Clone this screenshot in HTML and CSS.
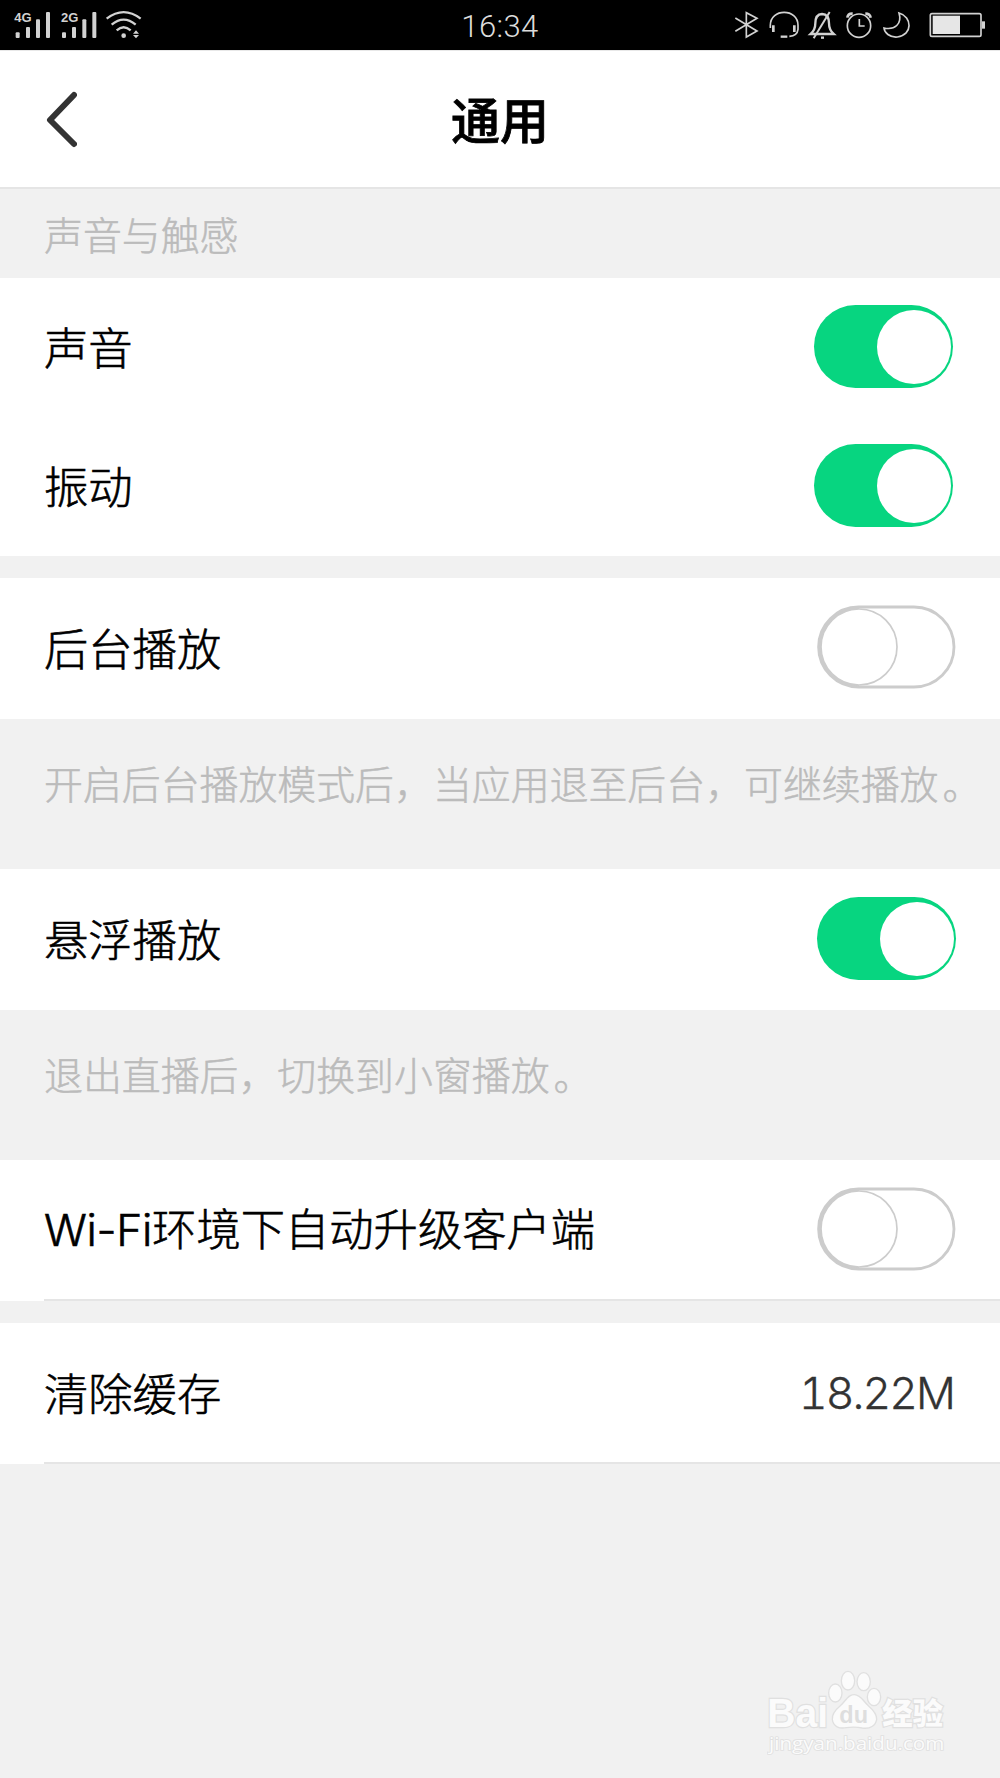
FILE: index.html
```html
<!DOCTYPE html>
<html lang="zh-CN">
<head>
<meta charset="utf-8">
<title>通用</title>
<link rel="stylesheet" href="styles.css">
</head>
<body>
<svg class="defs" width="0" height="0" aria-hidden="true">
  <symbol id="toggle-off" viewBox="0 0 139 84">
    <rect x="1.6" y="2" width="135.4" height="80" rx="40" fill="#fff" stroke="#ccc" stroke-width="2.8"/>
    <path d="M42 2a40 40 0 0 0 0 80z" fill="#ccc"/>
    <circle cx="42" cy="42" r="38" fill="#fff" stroke="#ccc" stroke-width="1.7"/>
  </symbol>
</svg>
<div class="screen">
  <div class="status">
    <svg class="status-left" viewBox="0 0 480 150">
      <g fill="#d2d2d2">
        <text x="43" y="66" class="net">4G</text>
        <text x="183" y="66" class="net">2G</text>
        <rect x="47" y="97" width="12" height="17" rx="3"/><rect x="78" y="81" width="12" height="33" rx="3"/><rect x="108" y="58" width="12" height="56" rx="3"/><rect x="138" y="36" width="12" height="78" rx="3"/>
        <rect x="186" y="97" width="12" height="17" rx="3"/><rect x="216" y="81" width="12" height="33" rx="3"/><rect x="247" y="58" width="12" height="56" rx="3"/><rect x="277" y="36" width="12" height="78" rx="3"/>
        <circle cx="371" cy="107" r="7"/>
        <path d="M399 101l9-10 9 10zM399 105h18l-9 10z"/>
      </g>
      <g fill="none" stroke="#d2d2d2" stroke-width="7">
        <path d="M320 56Q371 17 422 56M335 74Q371 44 407 74M350 91Q371 72 392 91"/>
      </g>
    </svg>
    <div class="clock">16:34</div>
    <svg class="status-right" viewBox="0 0 840 150">
      <g fill="none" stroke="#d2d2d2" stroke-width="5">
        <path d="M46 54l65 39-32 18V38l32 17-65 39"/>
        <path d="M151 84V76C151 24 234 24 234 76V88Q232 107 208 109"/>
        <path d="M160 76v20M223 76v20" stroke-width="8"/><path d="M182 110h20" stroke-width="7"/>
        <path d="M272 102Q286 90 286 70Q286 43 306 42Q327 43 327 70Q327 90 341 102Z" stroke-width="7"/>
        <path d="M303 113h9" stroke-width="7"/><path d="M329 36L281 115" stroke-width="6"/>
        <circle cx="417" cy="77" r="35"/><path d="M418 57v21h16"/>
        <path d="M382 53q2-13 16-12M436 41q14 0 16 12" stroke-width="8"/>
        <path d="M537 39C577 50 579 105 532 111C509 113 493 98 492 84C524 91 547 72 537 39z"/>
        <rect x="631" y="41" width="152" height="68" rx="5"/>
      </g>
      <path d="M638 47h82v55h-82z" fill="#e6e6e6"/><path d="M786 64h9v22h-9z" fill="#d2d2d2"/>
    </svg>
  </div>
  <header class="header">
    <svg class="back" viewBox="0 0 32 66"><path d="M29 9L5 34L29 58" fill="none" stroke="#333" stroke-width="6" stroke-linecap="round" stroke-linejoin="round"/></svg>
    <h1 class="title">通用</h1>
  </header>
  <div class="caption">声音与触感</div>
  <div class="row row-plain"><span class="label">声音</span><div class="switch"><div class="knob"></div></div></div>
  <div class="row row-plain"><span class="label">振动</span><div class="switch"><div class="knob"></div></div></div>
  <div class="gap"></div>
  <div class="row"><span class="label">后台播放</span><svg class="switch-off"><use href="#toggle-off"/></svg></div>
  <div class="note">开启后台播放模式后，当应用退至后台，可继续播放<span class="stop">。</span></div>
  <div class="row"><span class="label">悬浮播放</span><div class="switch"><div class="knob"></div></div></div>
  <div class="note">退出直播后，切换到小窗播放<span class="stop">。</span></div>
  <div class="row row-lined"><span class="label"><span class="latin">Wi-Fi</span>环境下自动升级客户端</span><svg class="switch-off"><use href="#toggle-off"/></svg></div>
  <div class="gap"></div>
  <div class="row row-lined"><span class="label">清除缓存</span><span class="value">18.22M</span></div>
  <footer class="footer">
    <svg class="brand" viewBox="0 0 540 270">
      <g fill="#fbfbfb" stroke="#e0e0e0" stroke-width="4">
        <g paint-order="stroke" stroke-width="7">
          <text x="1" y="176" class="brand-latin" textLength="182" lengthAdjust="spacingAndGlyphs">Bai</text>
          <text x="346" y="168" class="brand-han" textLength="182" lengthAdjust="spacingAndGlyphs">经验</text>
          <text x="6" y="247" class="brand-url" stroke-width="5" textLength="526" lengthAdjust="spacingAndGlyphs">jingyan.baidu.com</text>
        </g>
        <ellipse cx="205" cy="75" rx="20" ry="27"/><ellipse cx="243" cy="38" rx="20" ry="28"/><ellipse cx="290" cy="41" rx="20" ry="27"/><ellipse cx="321" cy="87" rx="20" ry="26"/>
        <path d="M262 80C242 79 237 99 220 113C203 127 194 139 196 155C199 176 217 183 238 179Q262 175 286 180C309 184 326 173 329 154C330 139 319 126 304 113C288 99 282 81 262 80z"/>
        <text x="217" y="164" class="brand-du" fill="#dedede" stroke="none" textLength="86" lengthAdjust="spacingAndGlyphs">du</text>
      </g>
    </svg>
  </footer>
</div>
</body>
</html>
```
FILE: styles.css
```css
* { box-sizing: border-box; }
body { margin: 0; background: #f1f1f1; font-family: "Noto Sans CJK SC", sans-serif; color: #000; }
.defs { display: block; position: absolute; }
.screen { width: 1000px; height: 1778px; display: flex; flex-direction: column; background: #f1f1f1; overflow: hidden; }
.status { height: 50px; flex: none; background: #000; display: flex; justify-content: space-between; }
.status-left, .status-right { flex: none; height: 50px; }
.status-left { width: 160px; margin-right: 120px; }
.status-right { width: 280px; }
.net { font: bold 39px "Liberation Sans", sans-serif; }
.clock { text-align: center; font: 300 31px/54px Roboto, sans-serif; letter-spacing: .4px; color: #dcdcdc; }
.header { height: 138.5px; flex: none; background: #fff; border-top: 1px solid #e8e8e8; border-bottom: 2px solid #e5e5e5; display: grid; grid-template-columns: 45px 1fr 45px; align-items: center; }
.back { width: 32px; height: 66px; margin: 0 0 0 45px; }
.title { margin: 0; padding-bottom: 1px; text-align: center; font-size: 49px; line-height: 60px; font-weight: 500; -webkit-text-stroke: .8px #000; }
.caption { height: 89px; flex: none; padding-left: 44px; font-size: 38.9px; line-height: 88px; font-weight: 300; color: #bbb; -webkit-text-stroke: .5px #bbb; }
.row { height: 141px; flex: none; background: #fff; padding: 0 44px; display: flex; align-items: center; justify-content: space-between; font-size: 44.3px; line-height: 60px; }
.row-plain { height: 139px; padding-right: 47px; }
.row-lined { background: linear-gradient(#e5e5e5, #e5e5e5) 44px 100% / 100% 2px no-repeat, #fff; }
.label { padding-bottom: 3px; font-weight: 300; -webkit-text-stroke: .6px #000; }
.gap { height: 22px; flex: none; }
.note { height: 150px; flex: none; padding: 34px 0 0 44px; font-size: 38.9px; line-height: 58px; font-weight: 300; color: #bbb; -webkit-text-stroke: .5px #bbb; white-space: nowrap; }
.stop { margin-left: 4px; }
.switch { width: 139px; height: 83px; border-radius: 42px; background: #07d580; padding: 4.5px 2.2px; display: flex; justify-content: flex-end; margin-bottom: 1px; }
.knob { width: 74px; height: 74px; border-radius: 50%; background: #fff; }
.switch-off { width: 139px; height: 84px; margin-bottom: 2px; }
.latin { font-family: Inter, sans-serif; font-weight: 300; letter-spacing: -.3px; }
.value { font-family: Inter, sans-serif; font-weight: 300; font-variant-numeric: tabular-nums; letter-spacing: -1.9px; color: #333; margin-right: 2px; -webkit-text-stroke: .3px #333; }
.footer { flex: 1; display: flex; justify-content: flex-end; align-items: flex-end; padding: 0 53px 20px 0; }
.brand { width: 180px; height: 90px; }
.brand-latin { font: bold 120px "Liberation Sans", sans-serif; }
.brand-han { font: 900 88px "Noto Sans CJK SC", sans-serif; }
.brand-url { font: 56px "Open Sans", sans-serif; }
.brand-du { font: bold 74px "Liberation Sans", sans-serif; }
```
